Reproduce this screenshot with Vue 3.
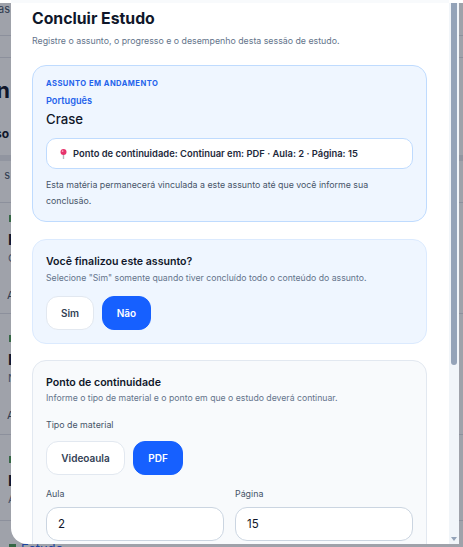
<script setup>
const lower = [
  { h: 111, title: 'P', sub: 'C', foot: 'A' },
  { h: 112, title: 'D', sub: 'N', foot: 'A' },
  { h: 77, title: 'D', sub: 'A', foot: '' }
]
</script>

<template>
  <div class="root">
    <div class="top-strip"><div class="top-strip-mid"></div></div>
    <div class="stage">
      <div class="page">
        <div class="p-row p-r1"><span class="stub s-small">as</span></div>
        <div class="p-row p-r2"></div>
        <div class="p-row p-r3">
          <span class="stub s-big">n</span>
          <span class="stub s-bold">so</span>
        </div>
        <div class="p-band"></div>
        <div class="p-row p-r4"><span class="stub s-small">s</span></div>
        <div v-for="(c, i) in lower" :key="i" class="p-card" :style="{ height: c.h + 'px' }">
          <i class="p-dot"></i>
          <b class="p-title">{{ c.title }}</b>
          <span class="p-sub">{{ c.sub }}</span>
          <span v-if="c.foot" class="p-foot">{{ c.foot }}</span>
        </div>
        <div class="p-estudo"><i class="p-ico"></i><span>Estudo</span></div>
      </div>
      <div class="backdrop"></div>

      <section class="modal">
        <div class="scroll">
          <h1>Concluir Estudo</h1>
          <p class="lead">Registre o assunto, o progresso e o desempenho desta sessão de estudo.</p>

          <div class="card card-current">
            <div class="eyebrow">ASSUNTO EM ANDAMENTO</div>
            <div class="subject">Português</div>
            <div class="topic">Crase</div>
            <div class="point">
              <svg class="pin" viewBox="0 0 7 10" width="7" height="10" aria-hidden="true">
                <path d="M3.5 5V10" stroke="#b4b7bd" stroke-width="1.4" />
                <circle cx="3.5" cy="3" r="3" fill="#e6336b" />
                <circle cx="2.6" cy="2.1" r="0.9" fill="#f7a3bd" />
              </svg>
              <span>Ponto de continuidade: Continuar em: PDF · Aula: 2 · Página: 15</span>
            </div>
            <p class="note">Esta matéria permanecerá vinculada a este assunto até que você informe sua conclusão.</p>
          </div>

          <div class="card card-question">
            <h2>Você finalizou este assunto?</h2>
            <p class="hint">Selecione "Sim" somente quando tiver concluído todo o conteúdo do assunto.</p>
            <div class="choices">
              <button class="choice">Sim</button>
              <button class="choice on">Não</button>
            </div>
          </div>

          <div class="card card-point">
            <h2>Ponto de continuidade</h2>
            <p class="hint">Informe o tipo de material e o ponto em que o estudo deverá continuar.</p>
            <div class="field-label type-label">Tipo de material</div>
            <div class="choices">
              <button class="choice wide">Videoaula</button>
              <button class="choice wide on">PDF</button>
            </div>
            <div class="fields">
              <label class="field">
                <span class="field-label">Aula</span>
                <input value="2" />
              </label>
              <label class="field">
                <span class="field-label">Página</span>
                <input value="15" />
              </label>
            </div>
          </div>
        </div>

        <div class="bar">
          <div class="thumb"></div>
          <div class="arrow"></div>
        </div>
      </section>
    </div>
  </div>
</template>

<style>
html, body { margin: 0; height: 100%; overflow: hidden; background: #fff; }
#app { height: 100%; }
</style>

<style scoped>
.root {
  width: 463px;
  height: 547px;
  display: flex;
  flex-direction: column;
  font-family: Inter, "Liberation Sans", sans-serif;
  overflow: hidden;
}
.top-strip { height: 3px; flex: none; background: #fff; padding: 0 14px 0 11px; }
.top-strip-mid { height: 3px; background: #f8fafc; }
.stage { position: relative; flex: 1; overflow: hidden; }

.page { width: 463px; background: #fff; color: #0f172a; height: 544px; overflow: hidden; }
.p-row { border-bottom: 1px solid #dfe2e8; box-sizing: border-box; display: flex; flex-direction: column; }
.p-r1 { height: 33px; }
.p-r2 { height: 22px; }
.p-r3 { height: 97px; padding-top: 17px; border-bottom: 0; }
.p-r4 { height: 42px; padding-top: 8px; }
.p-band { height: 6px; background: #e8eaee; }
.stub { width: 10px; display: flex; justify-content: flex-end; white-space: nowrap; overflow: hidden; flex: none; }
.s-small { font-size: 11px; line-height: 12px; color: #475569; }
.s-big { font-size: 22px; line-height: 30px; font-weight: 700; margin-bottom: 21px; }
.s-bold { font-size: 12px; line-height: 16px; font-weight: 700; width: 9px; }
.p-card {
  box-sizing: border-box;
  margin-bottom: 9px;
  border-bottom: 1px solid #dfe2e8;
  display: flex;
  flex-direction: column;
  align-items: flex-start;
  padding: 12px 0 0 8px;
}
.p-card > * { flex: none; }
.p-dot { width: 4px; height: 7px; background: #4f9d58; margin: 0 0 9px 1px; }
.p-title { font-size: 15px; line-height: 18px; color: #111827; margin-bottom: 2px; }
.p-sub { font-size: 11px; line-height: 14px; color: #64748b; margin-bottom: 23px; }
.p-foot { font-size: 11px; line-height: 14px; color: #475569; margin-left: -1px; }
.p-estudo { display: flex; align-items: flex-start; gap: 5px; padding: 12px 0 0 9px; color: #2563eb; font-size: 13px; line-height: 14px; }
.p-ico { width: 7px; height: 8px; background: #4f9d58; margin-top: 2px; }

.backdrop { position: absolute; inset: 0; background: rgba(15, 23, 42, 0.4); }

.modal {
  position: absolute;
  left: 11px;
  top: 0;
  width: 448px;
  height: 541px;
  display: flex;
  background: #fff;
  border-radius: 0 0 0 16px;
  overflow: hidden;
}
.scroll {
  flex: 1;
  min-width: 0;
  box-sizing: border-box;
  padding: 6px 22px 0 21px;
  overflow: hidden;
}
h1 {
  margin: 0;
  font-size: 15.8px;
  line-height: 20px;
  font-weight: 700;
  color: #0f172a;
}
.lead { margin: 6px 0 0; font-size: 8.8px; line-height: 12px; color: #64748b; }

.card { box-sizing: border-box; border: 1px solid; border-radius: 14px; padding: 0 13px; }
.card-current { margin-top: 18px; height: 157px; background: #eff6ff; border-color: #bfdbfe; padding-top: 12px; }
.eyebrow { font-size: 7.6px; line-height: 11px; font-weight: 700; letter-spacing: 0.45px; color: #2563eb; }
.subject { margin-top: 6px; font-size: 9.2px; line-height: 12px; font-weight: 600; color: #2563eb; }
.topic { margin-top: 4px; font-size: 13.2px; line-height: 17px; font-weight: 500; color: #0f172a; }
.point {
  margin-top: 10px;
  height: 31px;
  box-sizing: border-box;
  display: flex;
  align-items: center;
  gap: 6px;
  padding: 0 13px;
  background: #fff;
  border: 1px solid #bfdbfe;
  border-radius: 10px;
  font-size: 9.4px;
  font-weight: 600;
  color: #1e293b;
  white-space: nowrap;
}
.pin { flex: none; }
.note { margin: 8px 0 0; font-size: 8.8px; line-height: 16px; color: #475569; }

.card-question { margin-top: 17px; height: 105px; background: #eff6ff; border-color: #dbeafe; padding-top: 15px; }
.card-question .hint { margin-top: 3px; }
.card-question .choices { margin-top: 12px; }
.card-point { margin-top: 16px; height: 300px; background: #f8fafc; border-color: #e2e8f0; padding-top: 15px; }
h2 { margin: 0; font-size: 10.6px; line-height: 14px; font-weight: 600; color: #0f172a; }
.hint { margin: 2px 0 0; font-size: 8.7px; line-height: 12px; color: #64748b; white-space: nowrap; }
.choices { display: flex; gap: 8px; }
.choice {
  height: 34px;
  width: 48px;
  padding: 0;
  box-sizing: border-box;
  font-family: inherit;
  font-size: 10px;
  font-weight: 600;
  color: #334155;
  background: #fff;
  border: 1px solid #e2e8f0;
  border-radius: 12px;
}
.choice.on { width: 49px; background: #1660ff; border-color: #1660ff; color: #fff; }
.choice.wide { width: 79px; }
.choice.wide.on { width: 50px; }
.field-label { font-size: 8.85px; line-height: 12px; color: #475569; }
.type-label { margin-top: 15px; }
.type-label + .choices { margin-top: 10px; }
.fields { display: flex; gap: 11px; margin-top: 13px; }
.field { display: flex; flex-direction: column; gap: 7px; width: 178px; }
input {
  box-sizing: border-box;
  width: 100%;
  height: 34px;
  padding: 0 11px;
  font-family: inherit;
  font-size: 11.5px;
  color: #0f172a;
  background: #fff;
  border: 1px solid #cbd5e1;
  border-radius: 12px;
  outline: none;
}

.bar {
  flex: none;
  width: 10px;
  box-sizing: border-box;
  padding: 0 2px 3px;
  background: #f1f5f9;
  display: flex;
  flex-direction: column;
  align-items: center;
  justify-content: space-between;
}
.thumb { width: 6px; height: 362px; background: #94a3b8; border-radius: 0 0 3px 3px; }
.arrow { width: 0; height: 0; border-left: 3px solid transparent; border-right: 3px solid transparent; border-top: 4px solid #94a3b8; }
</style>
